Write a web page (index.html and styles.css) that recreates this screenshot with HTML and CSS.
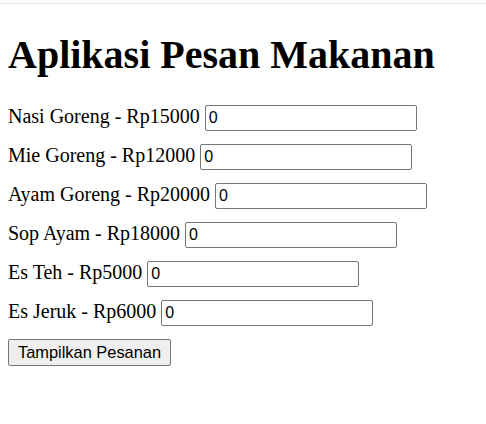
FILE: index.html
```html
<!DOCTYPE html>
<html lang="en">
<head>
    <meta charset="UTF-8">
    <meta name="viewport" content="width=device-width, initial-scale=1.0">
    <title>Aplikasi Pesan Makanan</title>
    <link rel="stylesheet" href="styles.css">
</head>
<body>
    <div class="topline"></div>
    <div class="page">
        <h1>Aplikasi Pesan Makanan</h1>

        <div class="item">Nasi Goreng - Rp15000 <input type="text" value="0"></div>
        <div class="item">Mie Goreng - Rp12000 <input type="text" value="0"></div>
        <div class="item">Ayam Goreng - Rp20000 <input type="text" value="0"></div>
        <div class="item">Sop Ayam - Rp18000 <input type="text" value="0"></div>
        <div class="item">Es Teh - Rp5000 <input type="text" value="0"></div>
        <div class="item">Es Jeruk - Rp6000 <input type="text" value="0"></div>

        <button>Tampilkan Pesanan</button>
    </div>
</body>
</html>
```

FILE: styles.css
```css
body {
    margin: 0;
    font-family: "Liberation Serif", "Times New Roman", serif;
    font-size: 20px;
    color: #000;
    background: #fff;
}

.topline {
    height: 3px;
    border-bottom: 1px solid #e2e2e2;
}

.page {
    padding: 0 8px;
}

h1 {
    font-size: 40px;
    margin: 26.8px 0;
}

.item {
    margin-bottom: 13px;
}

input {
    box-sizing: border-box;
    width: 212px;
    height: 26px;
    font-family: "Liberation Sans", Arial, sans-serif;
    font-size: 16px;
    padding: 1px 3px;
    border: 1px solid #767676;
    border-radius: 2px;
}

button {
    box-sizing: border-box;
    height: 27px;
    padding: 1px 9px;
    font-family: "Liberation Sans", Arial, sans-serif;
    font-size: 16.4px;
    color: #000;
    background: #efefef;
    border: 1px solid #767676;
    border-radius: 2px;
}
```
